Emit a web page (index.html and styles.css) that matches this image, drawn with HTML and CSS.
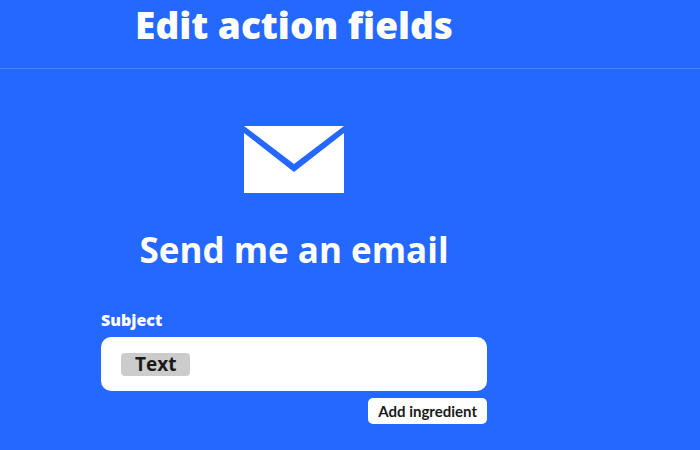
FILE: index.html
```html
<!DOCTYPE html>
<html lang="en">
<head>
<meta charset="utf-8">
<meta name="viewport" content="width=device-width, initial-scale=1">
<title>Edit action fields</title>
<link rel="stylesheet" href="styles.css">
</head>

<body>
<header class="page-header">
    <h1>Edit action fields</h1>
</header>

<main class="content">
    <svg class="service-icon" viewBox="0 0 100 67" aria-hidden="true">
        <path d="M0 0H100L50 38Z"/>
        <path d="M0 7L50 46L100 7V67H0Z"/>
    </svg>
    <h2>Send me an email</h2>

    <form class="fields">
        <label for="subject">Subject</label>
        <div class="field">
            <span class="ingredient">Text</span>
            <input type="text" id="subject" name="subject">
        </div>
        <button type="button" class="add-ingredient">Add ingredient</button>
    </form>
</main>
</body>
</html>
```

FILE: styles.css
```css
* {
    box-sizing: border-box;
}

body {
    margin: 0;
    background-color: #2468ff;
    color: #fff;
    font-family: "Open Sans", "Noto Sans", sans-serif;
    font-weight: 700;
}

h1,
h2 {
    margin: 0;
    line-height: 50px;
    text-align: center;
}

/* header */
.page-header {
    padding: 0 112px 18px 0;
    border-bottom: 1px solid #4c84ff;
}

h1 {
    font-size: 37px;
    font-weight: 800;
}

/* action */
.content {
    display: flex;
    flex-direction: column;
    align-items: center;
    padding: 57px 112px 24px 0;
}

.service-icon {
    width: 100px;
    height: 67px;
    fill: #fff;
}

h2 {
    margin-top: 32px;
    font-size: 35px;
}

/* form */
.fields {
    display: flex;
    flex-direction: column;
    width: 100%;
    max-width: 386px;
    margin-top: 33px;
}

.fields label {
    margin-bottom: 5px;
    font-size: 16px;
    font-weight: 800;
    line-height: 24px;
}

.field {
    display: flex;
    align-items: center;
    gap: 8px;
    height: 54px;
    padding: 0 20px;
    border-radius: 10px;
    background-color: #fff;
}

.ingredient {
    padding: 0 14px;
    border-radius: 4px;
    background-color: #ccc;
    color: #1a1a1a;
    font-size: 19px;
    line-height: 23px;
}

.field input {
    flex: 1;
    min-width: 0;
    padding: 0;
    border: none;
    outline: none;
    background: none;
    color: #1a1a1a;
    font: inherit;
    font-size: 19px;
}

.add-ingredient {
    align-self: flex-end;
    margin-top: 7px;
    padding: 0 10px;
    border: none;
    border-radius: 5px;
    background-color: #fff;
    color: #1a1a1a;
    font-family: Lato, sans-serif;
    font-size: 15px;
    font-weight: 700;
    line-height: 26px;
    cursor: pointer;
}
```
